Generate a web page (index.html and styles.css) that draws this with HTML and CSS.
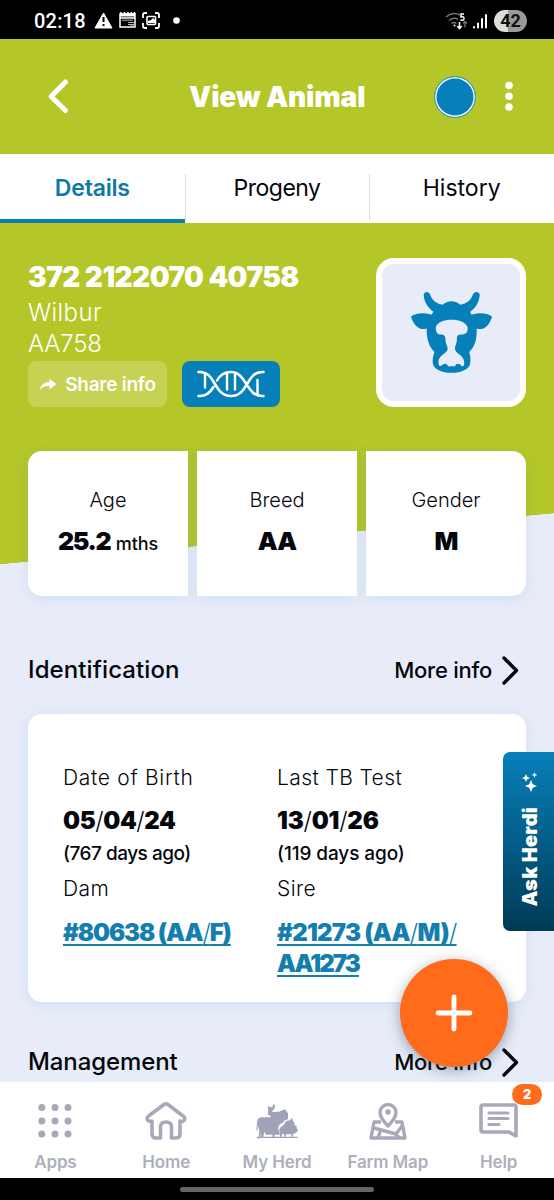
FILE: index.html
```html
<!DOCTYPE html>
<html lang="en">
<head>
<meta charset="utf-8">
<title>View Animal</title>
<link rel="stylesheet" href="styles.css">
</head>
<body>
<div class="phone">
  <header class="statusbar">
    <span class="clock">02:18</span>
    <svg class="status-icons" width="94" height="22" viewBox="0 0 94 22">
      <path d="M9.500 3L18 18H1z" fill="#fff" stroke="#fff" stroke-linejoin="round"/><path d="M9.500 7v5M9.500 14v2" stroke="#000" stroke-width="2"/>
      <path d="M26 4h15v13H26zM26 8h15" fill="none" stroke="#fff" stroke-width="1.500"/><path d="M26 5h15" stroke="#fff" stroke-width="3"/><path d="M27 2v3M30.500 2v3M34 2v3M37.500 2v3M40.500 2v3" stroke="#fff" stroke-width="1.500"/><path d="M28 10.200h11M34 12.500h6M34 14.500h6M36 16h4" stroke="#bbb" stroke-width="1"/>
      <path d="M49 8V5q0-2 2-2h2M61 3h2q2 0 2 2v3M65 13v3q0 2-2 2h-2M53 18h-2q-2 0-2-2v-3" fill="none" stroke="#fff" stroke-width="1.800"/><rect x="53" y="6.500" width="8.500" height="8" rx="1" fill="none" stroke="#fff" stroke-width="1.600"/><path d="M54 13v-2l3-1 2-2 2 2v3z" fill="#fff"/>
      <circle cx="82.500" cy="10.500" r="3.300" fill="#fff"/>
    </svg>
    <svg class="signal-icons" width="44" height="22" viewBox="0 0 44 22">
      <path d="M1 7Q8 1 15 5M4 10.500q5-4 9-1M6.500 13.500q2.500-2 5 0" fill="none" stroke="#777" stroke-width="1.500"/><path d="M19 4h-3v3q3-1 3 1.500t-3.500 1.500" fill="none" stroke="#fff" stroke-width="1.400"/><circle cx="9.500" cy="15.500" r="1" fill="#fff"/><path d="M14.500 12v6.500m-2.200-2.500l2.200 2.500 2.200-2.500" fill="none" stroke="#fff" stroke-width="1.500"/><path d="M20 17.500v-6m-2 2l2-2 2 2" fill="none" stroke="#777" stroke-width="1.300"/>
      <path d="M29 17v.5M33 13.500v4M37 9v8.500M41 5v12.500" stroke="#fff" stroke-width="2" stroke-linecap="round"/>
    </svg>
    <span class="battery">42</span>
  </header>

  <div class="appbar">
    <svg class="back" width="24" height="40" viewBox="0 0 24 40"><path d="M19.500 5L5 19.500 19.500 33.500" fill="none" stroke="#fff" stroke-width="5" stroke-linecap="round" stroke-linejoin="round"/></svg>
    <h1 class="title">View Animal</h1>
    <span class="dot"></span>
    <svg class="kebab" width="10" height="32" viewBox="0 0 10 32" fill="#fff"><circle cx="5" cy="4.500" r="3.800"/><circle cx="5" cy="15.300" r="3.800"/><circle cx="5" cy="26" r="3.800"/></svg>
  </div>

  <nav class="tabs">
    <a class="tab active">Details</a><a class="tab progeny">Progeny</a><a class="tab">History</a>
  </nav>

  <main class="content">
    <section class="animal">
      <div class="animal-info">
        <h2 class="tag">372 2122070 40758</h2>
        <p class="alias wilbur">Wilbur</p>
        <p class="alias code">AA758</p>
        <div class="actions">
          <button class="share"><svg width="18" height="13" viewBox="0 0 18 13"><path d="M1 12Q2 4 10.500 3.700V.8L17.500 6l-7 5.500V8Q4 7.500 1 12z" fill="#fff"/></svg><span>Share info</span></button>
          <button class="dna"><svg width="70" height="30" viewBox="0 0 70 30" fill="none" stroke="#fff" stroke-width="2.600" stroke-linecap="round"><path d="M2.500 3C20 1.500 17 27 35 27S50 1.500 67.500 3M2.500 27c7.500.7 12-4 15-9M21 11.500C24 6 28 3 35 3c16 0 15 25.500 32.500 24"/><path d="M9 5v13.500M31 5v15.500M39 5v15.500M61.500 11v15" stroke-width="2.400"/></svg></button>
        </div>
      </div>
      <div class="portrait">
        <svg width="81" height="81" viewBox="152 140 242 242"><path fill="#0780ba" d="M190 152c-1-15 16-16 20-2 6 17 20 26 37 28 13-14 39-14 52 0 17-2 31-11 37-28 4-14 23-13 21 2-2 19-13 37-28 47l4 9c20-7 45-6 61 5-5 24-25 44-46 36 2 30-5 54-22 70 4 14 4 20 3 33-3 39-109 39-112 0-1-13 1-19 5-33-17-16-24-40-23-70-21 8-41-12-47-36 16-11 41-12 61-5l6-9c-16-11-27-28-29-47z"/><path fill="#e7ecf8" d="M226 246c5-31 89-31 95 0 2 14-6 21-17 21-14 0-15 5-15 15 0 13-7 20-5 31 6 14 24 14 27 36 1 15-6 16-13 7-7-4-14-1-14 6h-22c0-8-9-10-16-5-6 8-12 5-12-8 2-22 20-22 27-36 2-14-6-15-6-31 0-12-4-15-16-15-8 0-13-8-13-21z"/></svg>
      </div>
    </section>

    <section class="stats">
      <div class="stat"><span class="stat-label age">Age</span><strong class="months">25.2 <small>mths</small></strong></div>
      <div class="stat"><span class="stat-label">Breed</span><strong>AA</strong></div>
      <div class="stat"><span class="stat-label">Gender</span><strong>M</strong></div>
    </section>

    <div class="section-head">
      <h3 class="identification">Identification</h3>
      <a class="more">More info<svg width="17" height="30" viewBox="0 0 17 30"><path d="M2 3L14.500 15.500 2 28" fill="none" stroke="#05070d" stroke-width="3.400" stroke-linecap="round" stroke-linejoin="round"/></svg></a>
    </div>

    <section class="details">
      <div class="column">
        <p class="label dob">Date of Birth</p><p class="value">05<i>/</i>04<i>/</i>24</p><p class="ago dob-ago">(767 days ago)</p>
        <p class="label relation">Dam</p><a class="link dam">#80638 (AA<i>/</i>F)</a>
      </div>
      <div class="column">
        <p class="label tb">Last TB Test</p><p class="value test">13<i>/</i>01<i>/</i>26</p><p class="ago">(119 days ago)</p>
        <p class="label relation">Sire</p><a class="link">#21273 (AA<i>/</i>M)<i>/</i><br><span class="herd-no">AA1273</span></a>
      </div>
    </section>

    <div class="section-head management">
      <h3>Management</h3>
      <a class="more">More info<svg width="17" height="30" viewBox="0 0 17 30"><path d="M2 3L14.500 15.500 2 28" fill="none" stroke="#05070d" stroke-width="3.400" stroke-linecap="round" stroke-linejoin="round"/></svg></a>
    </div>
  </main>

  <nav class="bottom-nav">
    <a><svg width="42" height="42" viewBox="0 0 42 42" fill="#a7a9b9"><circle cx="7.800" cy="7.500" r="3.500"/><circle cx="21" cy="7.500" r="3.500"/><circle cx="34" cy="7.500" r="3.500"/><circle cx="7.800" cy="21" r="3.500"/><circle cx="21" cy="21" r="3.500"/><circle cx="34" cy="21" r="3.500"/><circle cx="7.800" cy="34" r="3.500"/><circle cx="21" cy="34" r="3.500"/><circle cx="34" cy="34" r="3.500"/></svg><span>Apps</span></a>
    <a><svg width="42" height="42" viewBox="0 0 42 42" fill="none" stroke="#a7a9b9" stroke-width="3.600" stroke-linejoin="round"><path d="M19 4.500q2-1.500 4 0L38 16q3 2 1 4.500-2 2-4 .5V34q0 4-4 4h-4.500V27q0-5-5.500-5t-5.500 5v11H11q-4 0-4-4V21q-3 1-4.500-1-1-2 1-4z"/></svg><span>Home</span></a>
    <a class="herd"><svg width="46" height="42" viewBox="42 15 138 126" fill="#9fa2b8"><path d="M84 33l8 4 6-2 2-8 6 6-4 10-5 4v4l20-1c6-1 9-6 14-5l4-4 3 6 6 8v16l-4 3c-5 1-9 3-11 9-8 2-14 8-15 19l3 7 3 10H77c-1-11-13-11-15-1l-3 13h-4l3-24-5-17-1 18-3-2 2-25c2-7 4-13 12-14h29v-4l-8-4z"/><path d="M104 92v34h-6l-3-22c0-11-18-14-21 0l-4 22h-7V92z"/><path d="M133 88c2-9 7-12 14-11l10-8 2 9 6 7-3 5 9 3-2 6 5 6-5 8-9 3-2 9h-4v-7h-15l-2 7h-4v-8h-6l-3 9h-4v-12c-4-7-3-15 4-19z"/><path d="M50 125h123v4H50z"/></svg><span>My Herd</span></a>
    <a><svg width="42" height="42" viewBox="0 0 42 42" fill="none" stroke="#a7a9b9" stroke-width="3.400" stroke-linejoin="round"><path d="M14 22H7L4 38h34l-3-16h-7M7 28l22 6 6-8M14 29l-3 9M27 33l6 5" /><path fill="#fff" d="M21 26q-8-8-8-13.500a8 8 0 0116 0Q29 18 21 26z"/><circle cx="21" cy="12" r="2.800" fill="#a7a9b9" stroke="none"/></svg><span>Farm Map</span></a>
    <a class="help"><svg width="42" height="42" viewBox="0 0 42 42" fill="none" stroke="#a7a9b9" stroke-width="3.600" stroke-linecap="round" stroke-linejoin="round"><path d="M5 5h31q2 0 2 2v29l-7-4H5q-2 0-2-2V7q0-2 2-2z"/><path d="M11 13h19M11 18.500h19M11 24.500h10" stroke-width="3.200"/></svg><span>Help</span><b class="badge">2</b></a>
  </nav>
  <footer class="system"><span></span></footer>

  <aside class="ask"><svg width="18" height="20" viewBox="0 0 18 20" fill="#fff"><path d="M10 8l1.800 4.200L16 14l-4.200 1.800L10 20l-1.800-4.200L4 14l4.200-1.800zM5 2l1.200 2.800L9 6 6.200 7.200 5 10 3.800 7.200 1 6l2.800-1.200zM13.500 0l.8 2.200 2.200.8-2.200.8-.8 2.200-.8-2.200-2.200-.8 2.200-.8z"/></svg><span>Ask Herdi</span></aside>
  <button class="fab"><svg width="40" height="40" viewBox="0 0 40 40"><path d="M20 4v32M4 20h32" stroke="#fff" stroke-width="4.800" stroke-linecap="round"/></svg></button>
</div>
</body>
</html>
```
FILE: styles.css
```css
* { box-sizing: border-box; }
body, h1, h2, h3, p { margin: 0; }
body { font-family: "Inter", "Liberation Sans", sans-serif; color: #05070d; }
button { border: 0; padding: 0; font: inherit; }
svg { display: block; flex: none; }
.phone { position: relative; width: 554px; height: 1200px; overflow: hidden; display: flex; flex-direction: column; background: #e7ecf8; }
.statusbar { height: 39px; flex: none; background: #000; color: #fff; display: flex; align-items: center; padding: 3px 27px 0 34px; }
.clock { width: 60px; font: 500 20px Roboto, sans-serif; letter-spacing: .2px; }
.signal-icons { margin-left: auto; }
.battery { width: 33px; height: 22px; margin-left: 5px; border-radius: 11px; background: linear-gradient(90deg, #ddd 42%, #999 42%); color: #111; font: 700 18px/22px Roboto, sans-serif; text-align: center; }
.appbar { height: 115px; flex: none; background: #b4c628; display: flex; align-items: center; padding: 0 40px 0 46px; }
.title { margin-left: 119px; width: 245px; color: #fff; font-size: 28px; font-weight: 900; line-height: 40px; letter-spacing: -.1px; white-space: nowrap; }
.dot { width: 42px; height: 42px; border-radius: 50%; background: #0780ba; border: 1px solid #419e9e; box-shadow: inset 0 0 0 1.500px #edf8fb; }
.kebab { margin-left: auto; }
.tabs { height: 69px; flex: none; display: flex; background: #fff; }
.tab { flex: 1; text-align: center; font-size: 23px; line-height: 68px; }
.progeny { letter-spacing: -.5px; }
.tab + .tab { background: linear-gradient(#d8dade, #d8dade) 0 20px / 1px 46px no-repeat; }
.tab.active { color: #0e78a8; font-weight: 600; letter-spacing: -.2px; border-bottom: 4px solid #0780ae; }
.content { flex: 1; min-height: 0; overflow: hidden; padding: 35px 28px 0; background: linear-gradient(174.800deg, #b4c628 0, #b4c628 0) 0 0 / 0 0 no-repeat, linear-gradient(to bottom right, #b4c628 50%, transparent 50.500%) 0 290px / 554px 51px no-repeat, linear-gradient(#b4c628, #b4c628) 0 0 / 100% 290px no-repeat; }
.animal { display: flex; justify-content: space-between; height: 193px; color: #fff; }
.tag { font-size: 28px; line-height: 38px; font-weight: 900; letter-spacing: -.55px; white-space: nowrap; }
.alias { position: relative; top: 1px; font-size: 24px; line-height: 31px; font-weight: 300; }
.wilbur { letter-spacing: .4px; }
.code { letter-spacing: -.2px; }
.actions { display: flex; gap: 15px; margin-top: 3px; }
.share { width: 139px; height: 46px; border-radius: 8px; background: #c5d253; color: #fff; display: flex; align-items: center; justify-content: center; gap: 8px; font-size: 19px; font-weight: 600; letter-spacing: -.25px; white-space: nowrap; }
.dna { width: 98px; height: 46px; border-radius: 8px; background: #0780ba; display: grid; place-items: center; }
.portrait { width: 150px; height: 149px; border: 6px solid #fff; border-radius: 18px; background: #e7ecf8; display: grid; place-items: center; }
.stats { display: grid; grid-template-columns: repeat(3, 1fr); gap: 9px; height: 145px; }
.stat { background: #fff; display: flex; flex-direction: column; align-items: center; padding-top: 34px; box-shadow: 0 2px 12px rgba(75,145,205,.15); }
.stat:first-child { border-radius: 14px 0 0 14px; }
.stat:last-child { border-radius: 0 14px 14px 0; }
.stat-label { font-size: 20px; line-height: 31px; font-weight: 300; }
.stat strong { margin-top: 10px; font-size: 25px; line-height: 31px; font-weight: 900; letter-spacing: -.8px; }
.stat .months { letter-spacing: -1.400px; }
.stat small { margin-left: 2px; font-size: 18px; font-weight: 500; letter-spacing: -.1px; }
.section-head { display: flex; justify-content: space-between; align-items: center; height: 32px; margin-top: 58px; padding-right: 7px; }
.section-head h3 { font-size: 24px; font-weight: 500; line-height: 32px; letter-spacing: .1px; }
.section-head.management h3 { letter-spacing: -.1px; }
.more { display: flex; gap: 10px; align-items: center; font-size: 22px; line-height: 32px; font-weight: 500; letter-spacing: -.25px; white-space: nowrap; }
.details { height: 288px; margin-top: 28px; padding: 48px 35px 0; background: #fff; border-radius: 14px; display: grid; grid-template-columns: 214px 1fr; box-shadow: 0 2px 12px rgba(75,145,205,.15); }
.label { font-size: 21px; line-height: 32px; font-weight: 300; letter-spacing: .4px; white-space: nowrap; }
.dob { letter-spacing: .7px; }
.value { margin-top: 10px; font-size: 24px; line-height: 34px; font-weight: 900; letter-spacing: -.4px; }
.test { letter-spacing: -.2px; }
.value i, .link i { font-style: normal; font-weight: 300; }
.ago { font-size: 19px; line-height: 32px; font-weight: 500; letter-spacing: -.1px; white-space: nowrap; }
.dob-ago { letter-spacing: -.5px; }
.relation { margin-top: 3px; }
.link { display: block; margin-top: 12px; font-size: 24px; line-height: 31px; font-weight: 900; letter-spacing: -.75px; color: #147eaf; text-decoration: underline; text-decoration-thickness: 2px; text-underline-offset: 3px; white-space: nowrap; }
.dam { letter-spacing: -1.100px; }
.herd-no { letter-spacing: -1.900px; }
.section-head.management { margin-top: 44px; }
.bottom-nav { height: 96px; flex: none; background: #fff; display: grid; grid-template-columns: repeat(5, 1fr); }
.bottom-nav a { position: relative; display: flex; flex-direction: column; align-items: center; padding-top: 18px; color: #adb0bb; font-size: 17px; line-height: 24px; font-weight: 600; letter-spacing: -.15px; white-space: nowrap; }
.bottom-nav span { margin-top: 8px; }
.badge { position: absolute; left: 69px; top: 2px; width: 30px; height: 21px; border-radius: 11px; background: #ff6b1b; color: #fff; font-size: 13px; line-height: 20px; text-align: center; }
.system { height: 22px; flex: none; background: #000; display: flex; justify-content: center; padding-top: 9px; }
.system span { width: 194px; height: 5px; border-radius: 3px; background: #666; }
.ask { position: absolute; right: 0; top: 752px; width: 51px; height: 179px; border-radius: 7px 0 0 7px; background: linear-gradient(#0780ba, #003a55); color: #fff; display: flex; flex-direction: column; align-items: center; padding: 20px 0 22px 3px; gap: 15px; }
.ask span { writing-mode: vertical-rl; transform: rotate(180deg); font-size: 20px; line-height: 26px; font-weight: 900; letter-spacing: .25px; white-space: nowrap; }
.fab { position: absolute; left: 400px; top: 959px; width: 108px; height: 108px; border-radius: 50%; background: #ff6b1b; box-shadow: 0 3px 14px rgba(25,45,65,.4); display: grid; place-items: center; }
```
